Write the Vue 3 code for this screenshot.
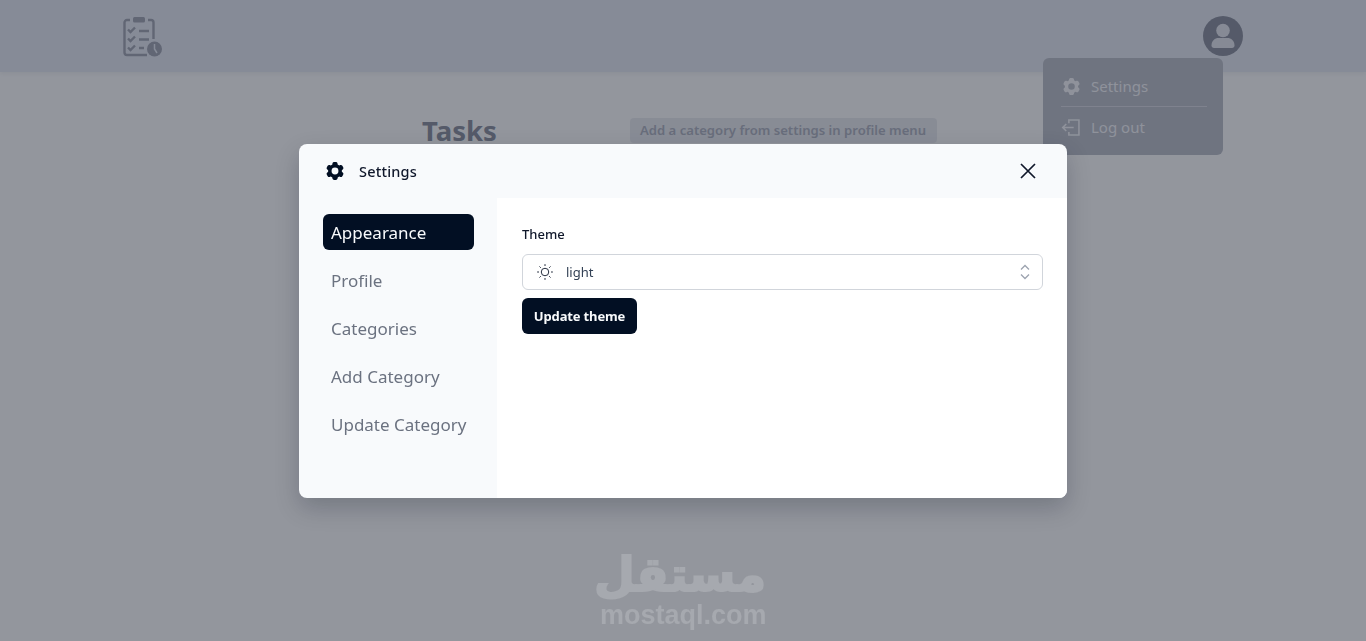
<template>
  <div class="page">
    <header class="topbar">
      <svg class="logo" viewBox="0 0 42 42" fill="none" stroke="#a3a8b6" stroke-width="2.400">
        <path d="M8 5H5A2.500 2.500 0 0 0 2.500 7.500V37.500A2.500 2.500 0 0 0 5 40H25" />
        <path d="M26 5h3A2.500 2.500 0 0 1 31.500 7.500V24" />
        <rect x="11" y="2" width="12" height="5.500" rx="1.500" fill="#a3a8b6" stroke="none" />
        <path d="M6 14.500l2.500 2.500L13 12.500M6 23.500l2.500 2.500L13 21.500M6 32.500l2.500 2.500L13 30.500" />
        <path d="M17 16h10M17 24.500h10M17 33h5" stroke-width="2.600" />
        <circle cx="32.500" cy="34" r="7.500" fill="#a3a8b6" stroke="none" />
        <path d="M32.500 29v5l2.500 4" stroke="#e3e8f2" stroke-width="1.500" />
      </svg>
      <div class="avatar">
        <svg viewBox="0 0 40 40" fill="#e3e6ee">
          <circle cx="20" cy="14.500" r="6.800" />
          <path d="M8.500 29.500c0-5 3.500-7.500 7-7.500h9c3.500 0 7 2.500 7 7.500 0 1.500-1 2.500-2.500 2.500H11c-1.500 0-2.500-1-2.500-2.500Z" />
        </svg>
      </div>
    </header>

    <div class="profile-menu">
      <div class="menu-item">
        <svg class="menu-icon" viewBox="0 0 24 24" fill="currentColor"><path fill-rule="evenodd" :d="cogPath" /></svg>
        <span>Settings</span>
      </div>
      <div class="menu-item menu-item-last">
        <svg class="menu-icon" viewBox="0 0 24 24" fill="none" stroke="currentColor" stroke-width="1.800">
          <path d="M9 7V3.500h11.500v17H9V17" />
          <path d="M14.500 12H2M6 8l-4 4 4 4" />
        </svg>
        <span>Log out</span>
      </div>
    </div>

    <main class="content">
      <h1 class="title">Tasks</h1>
      <div class="hint">Add a category from settings in profile menu</div>
    </main>

    <div class="overlay">
      <div class="modal">
        <div class="modal-head">
          <div class="modal-title">
            <svg class="head-icon" viewBox="0 0 24 24" fill="#020f23"><path fill-rule="evenodd" :d="cogPath" /></svg>
            <span>Settings</span>
          </div>
          <svg class="close" viewBox="0 0 24 24" fill="none" stroke="#0f172a" stroke-width="1.700">
            <path d="M5 5l14 14M19 5L5 19" />
          </svg>
        </div>
        <div class="modal-body">
          <nav class="side">
            <div v-for="item in tabs" :key="item" class="tab" :class="{ 'tab-active': item === active }">{{ item }}</div>
          </nav>
          <section class="panel">
            <label class="field-label">Theme</label>
            <div class="select">
              <svg class="sun" viewBox="0 0 24 24" fill="none" stroke="#0f172a" stroke-width="1.200">
                <circle cx="12" cy="12" r="5" />
                <path d="M12 1.500v2.500M12 20v2.500M1.500 12H4M20 12h2.500M4.600 4.600l1.800 1.800M17.600 17.600l1.800 1.800M4.600 19.400l1.800-1.800M17.600 6.400l1.800-1.800" />
              </svg>
              <span class="select-value">light</span>
              <svg class="chevrons" viewBox="0 0 12 18" fill="none" stroke="#9ca3af" stroke-width="1.300">
                <path d="M2 6.500l4-4 4 4M2 11.500l4 4 4-4" />
              </svg>
            </div>
            <button class="save">Update theme</button>
          </section>
        </div>
      </div>
      <div class="watermark">
        <div class="wm-ar" dir="rtl" lang="ar">مستقل</div>
        <div class="wm-en">mostaql.com</div>
      </div>
    </div>
  </div>
</template>

<script setup>
const active = 'Appearance'
const tabs = ['Appearance', 'Profile', 'Categories', 'Add Category', 'Update Category']

const cogPath = 'M11.078 2.25c-.917 0-1.699.663-1.85 1.567L9.05 4.889c-.02.12-.115.26-.297.348a7.493 7.493 0 0 0-.986.57c-.166.115-.334.126-.45.083L6.3 5.508a1.875 1.875 0 0 0-2.282.819l-.922 1.597a1.875 1.875 0 0 0 .432 2.385l.84.692c.095.078.17.229.154.43a7.598 7.598 0 0 0 0 1.139c.015.2-.059.352-.153.43l-.841.692a1.875 1.875 0 0 0-.432 2.385l.922 1.597a1.875 1.875 0 0 0 2.282.818l1.019-.382c.115-.043.283-.031.45.082.312.214.641.405.985.57.182.088.277.228.297.35l.178 1.071c.151.904.933 1.567 1.85 1.567h1.844c.916 0 1.699-.663 1.85-1.567l.178-1.072c.02-.12.114-.26.297-.349.344-.165.673-.356.985-.57.167-.114.335-.125.45-.082l1.02.382a1.875 1.875 0 0 0 2.28-.819l.923-1.597a1.875 1.875 0 0 0-.432-2.385l-.84-.692c-.095-.078-.17-.229-.154-.43a7.614 7.614 0 0 0 0-1.139c-.016-.2.059-.352.153-.43l.84-.692c.708-.582.891-1.59.433-2.385l-.922-1.597a1.875 1.875 0 0 0-2.282-.818l-1.02.382c-.114.043-.282.031-.449-.083a7.49 7.49 0 0 0-.985-.57c-.183-.087-.277-.227-.297-.348l-.179-1.072a1.875 1.875 0 0 0-1.85-1.567h-1.843ZM12 15.75a3.75 3.75 0 1 0 0-7.5 3.75 3.75 0 0 0 0 7.5Z'
</script>

<style>
html, body {
  margin: 0;
  background: #f8fafc;
}
</style>

<style scoped>
.page {
  position: relative;
  height: 641px;
  overflow: hidden;
  background: #f8fafc;
  font-family: "Noto Sans", "Open Sans", sans-serif;
  color: #0f172a;
}

.topbar {
  height: 72px;
  box-sizing: border-box;
  padding: 0 123px 0 122px;
  display: flex;
  align-items: center;
  justify-content: space-between;
  background: #e3e8f2;
  box-shadow: 0 2px 4px rgba(15, 23, 42, 0.05);
}

.logo {
  width: 42px;
  height: 42px;
}

.avatar {
  width: 40px;
  height: 40px;
  border-radius: 50%;
  background: #8f95a4;
}

.avatar svg {
  display: block;
}

.profile-menu {
  position: absolute;
  left: 1043px;
  top: 58px;
  width: 180px;
  height: 97px;
  box-sizing: border-box;
  padding: 8px 16px 0 18px;
  border-radius: 6px;
  background: #bbc0cb;
  color: #f1f3f8;
  font-size: 15px;
}

.menu-item {
  height: 40px;
  display: flex;
  align-items: center;
  gap: 9px;
  border-bottom: 1px solid #d6d9e3;
}

.menu-item-last {
  border-bottom: 0;
  height: 40px;
}

.menu-icon {
  width: 21px;
  height: 21px;
}

.content {
  width: 522px;
  margin: 0 auto;
  padding-top: 45px;
  display: flex;
  align-items: flex-start;
}

.title {
  width: 208px;
  margin: 0;
  font-size: 27.500px;
  line-height: 28px;
  font-weight: 700;
  color: #8f95a4;
}

.hint {
  height: 25px;
  line-height: 24px;
  margin-top: 1px;
  padding: 0 11px 0 10px;
  border-radius: 4px;
  background: #e6e9ef;
  color: #b0b5c3;
  font-size: 13.100px;
  font-weight: 600;
}

.overlay {
  position: fixed;
  inset: 0;
  display: flex;
  align-items: center;
  justify-content: center;
  background: rgba(2, 8, 23, 0.41);
}

.modal {
  width: 768px;
  height: 354px;
  display: flex;
  flex-direction: column;
  border-radius: 8px;
  overflow: hidden;
  background: #f8fafc;
  box-shadow: 0 10px 25px rgba(2, 8, 23, 0.2);
}

.modal-head {
  height: 54px;
  flex: none;
  padding: 0 27px 0 25px;
  display: flex;
  align-items: center;
  justify-content: space-between;
}

.modal-title {
  display: flex;
  align-items: center;
  gap: 13px;
  font-size: 14.500px;
  font-weight: 500;
  letter-spacing: 0.2px;
}

.head-icon {
  width: 22px;
  height: 22px;
}

.close {
  width: 24px;
  height: 24px;
}

.modal-body {
  flex: 1;
  display: flex;
}

.side {
  width: 198px;
  box-sizing: border-box;
  padding: 16px 23px 0 24px;
  display: flex;
  flex-direction: column;
  gap: 12px;
}

.tab {
  height: 36px;
  line-height: 38px;
  padding: 0 8px;
  border-radius: 6px;
  font-size: 17px;
  color: #6b7280;
  white-space: nowrap;
}

.tab-active {
  background: #020f23;
  color: #f8fafc;
}

.panel {
  flex: 1;
  box-sizing: border-box;
  padding: 26px 24px 0 25px;
  background: #fff;
}

.field-label {
  display: block;
  height: 20px;
  line-height: 20px;
  margin-bottom: 10px;
  font-size: 13px;
  font-weight: 500;
}

.select {
  height: 36px;
  box-sizing: border-box;
  padding: 0 10px 0 13px;
  display: flex;
  align-items: center;
  border: 1px solid #d1d5db;
  border-radius: 6px;
  font-size: 13px;
  color: #334155;
}

.sun {
  width: 18px;
  height: 18px;
}

.select-value {
  flex: 1;
  margin-left: 12px;
}

.chevrons {
  width: 14px;
  height: 18px;
}

.save {
  display: block;
  margin-top: 8px;
  width: 115px;
  height: 36px;
  padding: 0;
  border: 0;
  border-radius: 6px;
  background: #020f23;
  color: #f8fafc;
  font-family: inherit;
  font-size: 13px;
  font-weight: 700;
  letter-spacing: -0.15px;
}

.watermark {
  position: absolute;
  left: 600px;
  top: 555px;
  width: 166px;
  text-align: center;
  color: #fff;
  opacity: 0.17;
  font-family: "DejaVu Sans", sans-serif;
  font-weight: 700;
}

.wm-ar {
  height: 46px;
  line-height: 40px;
  font-size: 47px;
  -webkit-text-stroke: 2px #fff;
}

.wm-en {
  font-family: "Liberation Sans", sans-serif;
  font-size: 27px;
  line-height: 28px;
  font-weight: 700;
  white-space: nowrap;
}
</style>
